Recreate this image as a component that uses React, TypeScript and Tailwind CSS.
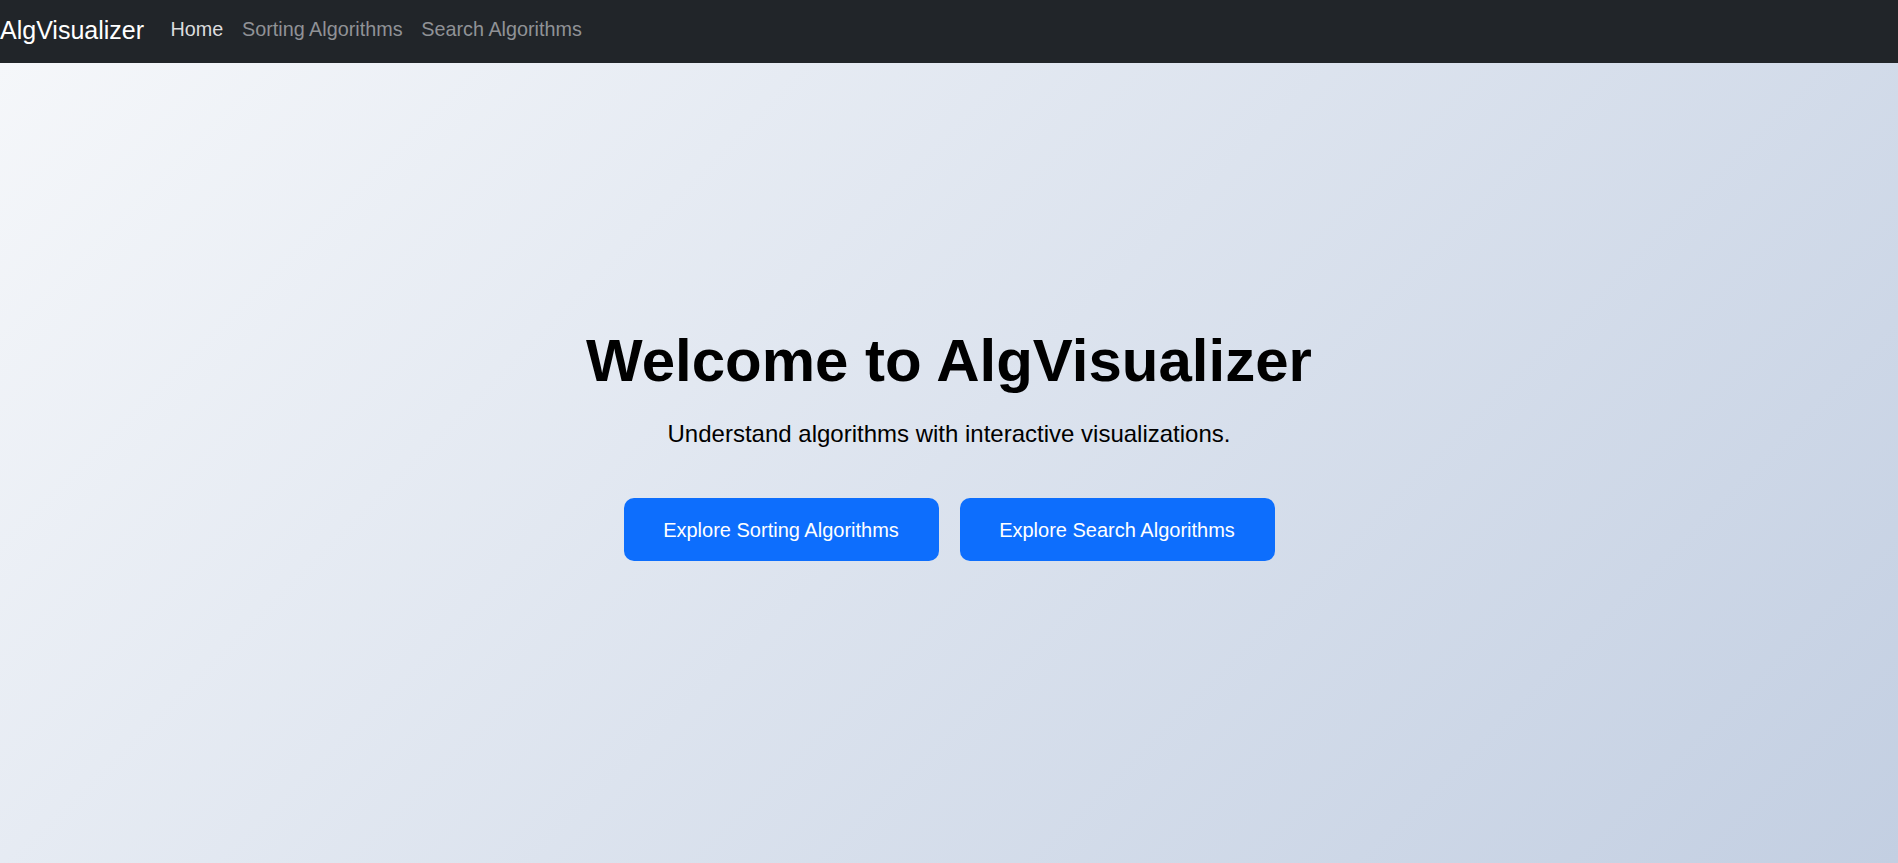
import React from "react";

const navLinks = [
  { label: "Home", active: true },
  { label: "Sorting Algorithms", active: false },
  { label: "Search Algorithms", active: false },
];

export default function App() {
  return (
    <div className="min-h-screen font-['Liberation_Sans',Arial,sans-serif]">
      {/* top navbar */}
      <nav className="flex h-[63px] items-center bg-[#212529] pb-[3px]">
        <a href="#" className="mr-[17px] text-[25px] leading-none text-white">
          AlgVisualizer
        </a>
        <div className="flex items-center">
          {navLinks.map((link) => (
            <a
              key={link.label}
              href="#"
              className={
                "px-[9.4px] text-[19.8px] leading-none " +
                (link.active ? "text-[#dcdddf]" : "text-[#909296]")
              }
            >
              {link.label}
            </a>
          ))}
        </div>
      </nav>

      {/* hero */}
      <section className="flex h-[800px] flex-col items-center bg-linear-135 from-[#f5f7fa] to-[#c3cfe2] pt-[262px] text-center">
        <h1 className="text-[60px] leading-[72px] font-bold text-black">Welcome to AlgVisualizer</h1>
        <p className="mt-[19px] text-[24px] leading-[36px] text-black">
          Understand algorithms with interactive visualizations.
        </p>
        <div className="mt-[46px] flex gap-[21px]">
          <button className="h-[63px] w-[315px] rounded-[10px] bg-[#0d6efd] text-[20px] text-white">
            Explore Sorting Algorithms
          </button>
          <button className="h-[63px] w-[315px] rounded-[10px] bg-[#0d6efd] text-[20px] text-white">
            Explore Search Algorithms
          </button>
        </div>
      </section>
    </div>
  );
}
